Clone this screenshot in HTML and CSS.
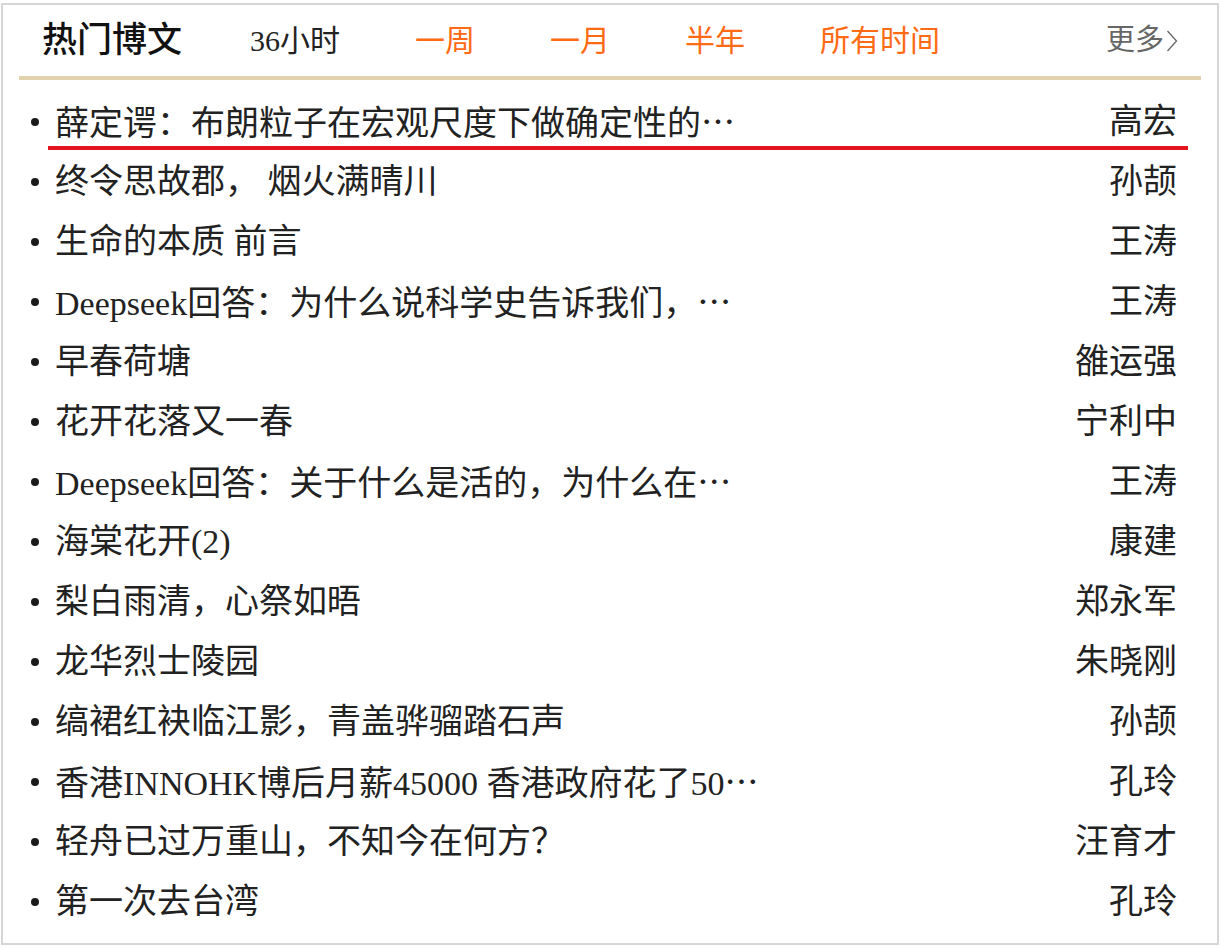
FILE: index.html
```html
<!doctype html>

<html>
  <head>
    <meta http-equiv="Content-Type" content="text/html; charset=utf-8">
    <title>热门博文</title>
    <link rel="stylesheet" href="styles.css">
  </head>
  <body>

    <div class="box">
      <div class="head">
        <h2>热门博文</h2>
        <ul class="tabs">
          <li class="on">36小时</li>
          <li>一周</li>
          <li>一月</li>
          <li>半年</li>
          <li>所有时间</li>
        </ul>
        <a class="more" href="#">更多<svg width="12" height="24" viewBox="0 0 12 24"><polyline points="1.5,2 10.5,12 1.5,22" fill="none" stroke="#666" stroke-width="1.3"/></svg></a>
      </div>

      <ul class="list">
        <li><span class="dot"></span><a class="item hl" href="#"><span class="title">薛定谔：布朗粒子在宏观尺度下做确定性的<span class="ell">…</span></span><span class="author">高宏</span></a></li>
        <li><span class="dot"></span><a class="item" href="#"><span class="title">终令思故郡， 烟火满晴川</span><span class="author">孙颉</span></a></li>
        <li><span class="dot"></span><a class="item" href="#"><span class="title">生命的本质 前言</span><span class="author">王涛</span></a></li>
        <li><span class="dot"></span><a class="item" href="#"><span class="title">Deepseek回答：为什么说科学史告诉我们，<span class="ell">…</span></span><span class="author">王涛</span></a></li>
        <li><span class="dot"></span><a class="item" href="#"><span class="title">早春荷塘</span><span class="author">雒运强</span></a></li>
        <li><span class="dot"></span><a class="item" href="#"><span class="title">花开花落又一春</span><span class="author">宁利中</span></a></li>
        <li><span class="dot"></span><a class="item" href="#"><span class="title">Deepseek回答：关于什么是活的，为什么在<span class="ell">…</span></span><span class="author">王涛</span></a></li>
        <li><span class="dot"></span><a class="item" href="#"><span class="title">海棠花开(2)</span><span class="author">康建</span></a></li>
        <li><span class="dot"></span><a class="item" href="#"><span class="title">梨白雨清，心祭如晤</span><span class="author">郑永军</span></a></li>
        <li><span class="dot"></span><a class="item" href="#"><span class="title">龙华烈士陵园</span><span class="author">朱晓刚</span></a></li>
        <li><span class="dot"></span><a class="item" href="#"><span class="title">缟裙红袂临江影，青盖骅骝踏石声</span><span class="author">孙颉</span></a></li>
        <li><span class="dot"></span><a class="item" href="#"><span class="title">香港INNOHK博后月薪45000 香港政府花了50<span class="ell">…</span></span><span class="author">孔玲</span></a></li>
        <li><span class="dot"></span><a class="item" href="#"><span class="title">轻舟已过万重山，不知今在何方？</span><span class="author">汪育才</span></a></li>
        <li><span class="dot"></span><a class="item" href="#"><span class="title">第一次去台湾</span><span class="author">孔玲</span></a></li>
      </ul>
    </div>

  </body>
</html>
```

FILE: styles.css
```css
body {
  background: #fff;
  color:      #222;
  font:       34px/1 "Liberation Serif", "Noto Sans CJK SC", serif;
  margin:     0;
  padding:    0;
}

.box {
  border:     2px solid #d6d6d6;
  box-sizing: border-box;
  height:     942px;
  margin:     3px 0 0 1px;
  padding:    0 16px 10px;
  width:      1218px;
}

.head {
  align-items:   center;
  border-bottom: 4px solid #e0d3ad;
  display:       flex;
  height:        71px;
  padding:       0 23px;
}
h2 {
  color:       #111;
  font-size:   35px;
  font-weight: 500;
  margin:      0 68px 0 0;
}
.tabs {
  display:    flex;
  font-size:  30px;
  gap:        75px;
  list-style: none;
  margin:     0;
  padding:    0;
}
.tabs li {
  color: #ff6a14;
}
.tabs li.on {
  color: #222;
}
.more {
  align-items:     center;
  color:           #666;
  display:         flex;
  font-size:       29px;
  gap:             2px;
  margin-left:     auto;
  text-decoration: none;
}

.list {
  list-style: none;
  margin:     0;
  padding:    12px 13px 0 12px;
}
.list li {
  align-items: center;
  display:     flex;
  height:      60px;
}
.dot {
  background:    #1a1a1a;
  border-radius: 50%;
  flex:          none;
  height:        8px;
  margin-right:  9px;
  width:         8px;
}
.item {
  align-items:     center;
  align-self:      stretch;
  color:           #222;
  display:         flex;
  flex:            1;
  justify-content: space-between;
  padding:         0 11px 0 7px;
  text-decoration: none;
}
.item.hl {
  background: linear-gradient(#e5141e, #e5141e) no-repeat left 0 bottom 2px / 100% 4px;
}
.title {
  white-space: nowrap;
}
.ell {
  font-family: "Noto Sans CJK SC", sans-serif;
}
```
